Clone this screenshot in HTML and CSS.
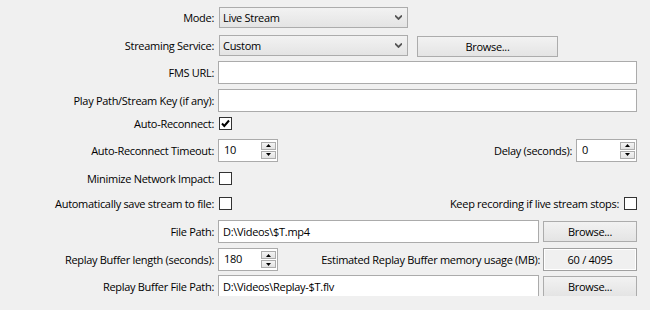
FILE: index.html
```html
<!DOCTYPE html>
<html lang="en">
<head>
    <meta charset="UTF-8">
    <title>Broadcast Settings</title>
    <link rel="stylesheet" href="styles.css">
</head>
<body>

    <div class="settings">
        <!-- Mode -->
        <div class="row" id="row-mode">
            <span class="label">Mode:</span>
            <div class="combo">
                <span>Live Stream</span>
                <svg class="chevron" width="7" height="5" viewBox="0 0 7 5"><path d="M0 0.5 L3.5 4 L7 0.5" fill="none" stroke="#555" stroke-width="1.8"/></svg>
            </div>
        </div>

        <!-- Streaming service -->
        <div class="row" id="row-service">
            <span class="label">Streaming Service:</span>
            <div class="combo">
                <span>Custom</span>
                <svg class="chevron" width="7" height="5" viewBox="0 0 7 5"><path d="M0 0.5 L3.5 4 L7 0.5" fill="none" stroke="#555" stroke-width="1.8"/></svg>
            </div>
            <div class="button button-service">Browse...</div>
        </div>

        <div class="row" id="row-url">
            <span class="label">FMS URL:</span>
            <div class="input input-wide"></div>
        </div>

        <div class="row" id="row-key">
            <span class="label">Play Path/Stream Key (if any):</span>
            <div class="input input-wide"></div>
        </div>

        <div class="row" id="row-reconnect">
            <span class="label">Auto-Reconnect:</span>
            <div class="checkbox">
                <svg width="11" height="11" viewBox="0 0 11 11"><path d="M2 5.5 L4.3 8 L9 2.5" fill="none" stroke="#000" stroke-width="2"/></svg>
            </div>
        </div>

        <div class="row" id="row-timeout">
            <span class="label">Auto-Reconnect Timeout:</span>
            <div class="spin">
                <span class="spin-value">10</span>
                <div class="spin-btns">
                    <div class="spin-btn"><svg width="5" height="3" viewBox="0 0 5 3"><path d="M0 3 L2.5 0 L5 3 Z" fill="#000"/></svg></div>
                    <div class="spin-btn"><svg width="5" height="3" viewBox="0 0 5 3"><path d="M0 0 L2.5 3 L5 0 Z" fill="#000"/></svg></div>
                </div>
            </div>
            <span class="label-right">Delay (seconds):</span>
            <div class="spin spin-delay">
                <span class="spin-value">0</span>
                <div class="spin-btns">
                    <div class="spin-btn"><svg width="5" height="3" viewBox="0 0 5 3"><path d="M0 3 L2.5 0 L5 3 Z" fill="#000"/></svg></div>
                    <div class="spin-btn"><svg width="5" height="3" viewBox="0 0 5 3"><path d="M0 0 L2.5 3 L5 0 Z" fill="#000"/></svg></div>
                </div>
            </div>
        </div>

        <div class="row" id="row-network">
            <span class="label">Minimize Network Impact:</span>
            <div class="checkbox"></div>
        </div>

        <div class="row" id="row-save">
            <span class="label">Automatically save stream to file:</span>
            <div class="checkbox"></div>
            <span class="label-right">Keep recording if live stream stops:</span>
            <div class="checkbox"></div>
        </div>

        <div class="row" id="row-file">
            <span class="label">File Path:</span>
            <div class="input input-path">D:\Videos\$T.mp4</div>
            <div class="button button-browse">Browse...</div>
        </div>

        <div class="row" id="row-buffer">
            <span class="label">Replay Buffer length (seconds):</span>
            <div class="spin">
                <span class="spin-value">180</span>
                <div class="spin-btns">
                    <div class="spin-btn"><svg width="5" height="3" viewBox="0 0 5 3"><path d="M0 3 L2.5 0 L5 3 Z" fill="#000"/></svg></div>
                    <div class="spin-btn"><svg width="5" height="3" viewBox="0 0 5 3"><path d="M0 0 L2.5 3 L5 0 Z" fill="#000"/></svg></div>
                </div>
            </div>
            <span class="label-right label-usage">Estimated Replay Buffer memory usage (MB):</span>
            <div class="value-box">60 / 4095</div>
        </div>

        <div class="row" id="row-buffer-file">
            <span class="label">Replay Buffer File Path:</span>
            <div class="input input-path">D:\Videos\Replay-$T.flv</div>
            <div class="button button-browse">Browse...</div>
        </div>
    </div>

</body>
</html>
```

FILE: styles.css
```css
* {
    margin: 0;
    padding: 0;
    box-sizing: border-box;
    font-family: 'Open Sans', sans-serif;
}

body {
    background-color: #f0f0f0;
    color: #000;
    font-size: 11px;
    letter-spacing: -0.3px;
}

.settings {
    width: 637px;
    padding-top: 3px;
}

.row {
    display: flex;
    align-items: center;
    white-space: nowrap;
}

/* alturas das linhas (o dialogo original nao tem espacamento regular) */
#row-mode { height: 28px; }
#row-service { height: 28px; }
#row-url { height: 26px; }
#row-key { height: 30px; }
#row-reconnect { height: 17px; }
#row-timeout { height: 36px; }
#row-network { height: 20px; }
#row-save { height: 31px; }
#row-file { height: 24px; }
#row-buffer { height: 33px; }
#row-buffer-file { height: 20px; }

.label {
    width: 214px;
    margin-right: 4px;
    text-align: right;
}

.label-right {
    flex: 1;
    text-align: right;
    margin-right: 4px;
}

.label-usage {
    margin-right: 3px;
}

.combo {
    width: 189px;
    height: 21px;
    margin-left: 1px;
    padding: 0 5px 0 3px;
    border: 1px solid #acacac;
    background: linear-gradient(#f2f2f2, #e4e4e4);
    display: flex;
    align-items: center;
    justify-content: space-between;
}

.button {
    height: 21px;
    border: 1px solid #acacac;
    background: linear-gradient(#f2f2f2, #e4e4e4);
    display: flex;
    align-items: center;
    justify-content: center;
}

.button-service {
    width: 141px;
    margin-left: 9px;
    margin-top: 2px;
}

.button-browse {
    width: 94px;
    margin-left: 4px;
}

.input {
    height: 23px;
    padding-left: 4px;
    border: 1px solid #ababab;
    background-color: #fff;
    display: flex;
    align-items: center;
}

.input-wide {
    width: 419px;
}

.input-path {
    width: 321px;
}

.checkbox {
    width: 13px;
    height: 13px;
    margin-left: 1px;
    border: 1px solid #333;
    background-color: #fff;
    display: flex;
    align-items: center;
    justify-content: center;
}

.spin {
    width: 60px;
    height: 23px;
    padding: 0 1px 0 5px;
    border: 1px solid #ababab;
    background-color: #fff;
    display: flex;
    align-items: center;
}

.spin-delay {
    width: 61px;
}

.spin-value {
    flex: 1;
    margin-top: -2px;
}

.spin-btns {
    display: flex;
    flex-direction: column;
    gap: 1px;
}

.spin-btn {
    width: 15px;
    height: 8px;
    border: 1px solid #acacac;
    background: linear-gradient(#f4f4f4, #e2e2e2);
    display: flex;
    align-items: center;
    justify-content: center;
}

.value-box {
    width: 94px;
    height: 23px;
    border: 1px solid #a0a0a0;
    box-shadow: inset 1px 1px 0 #fff, inset -1px -1px 0 #fff;
    display: flex;
    align-items: center;
    justify-content: center;
}
```
